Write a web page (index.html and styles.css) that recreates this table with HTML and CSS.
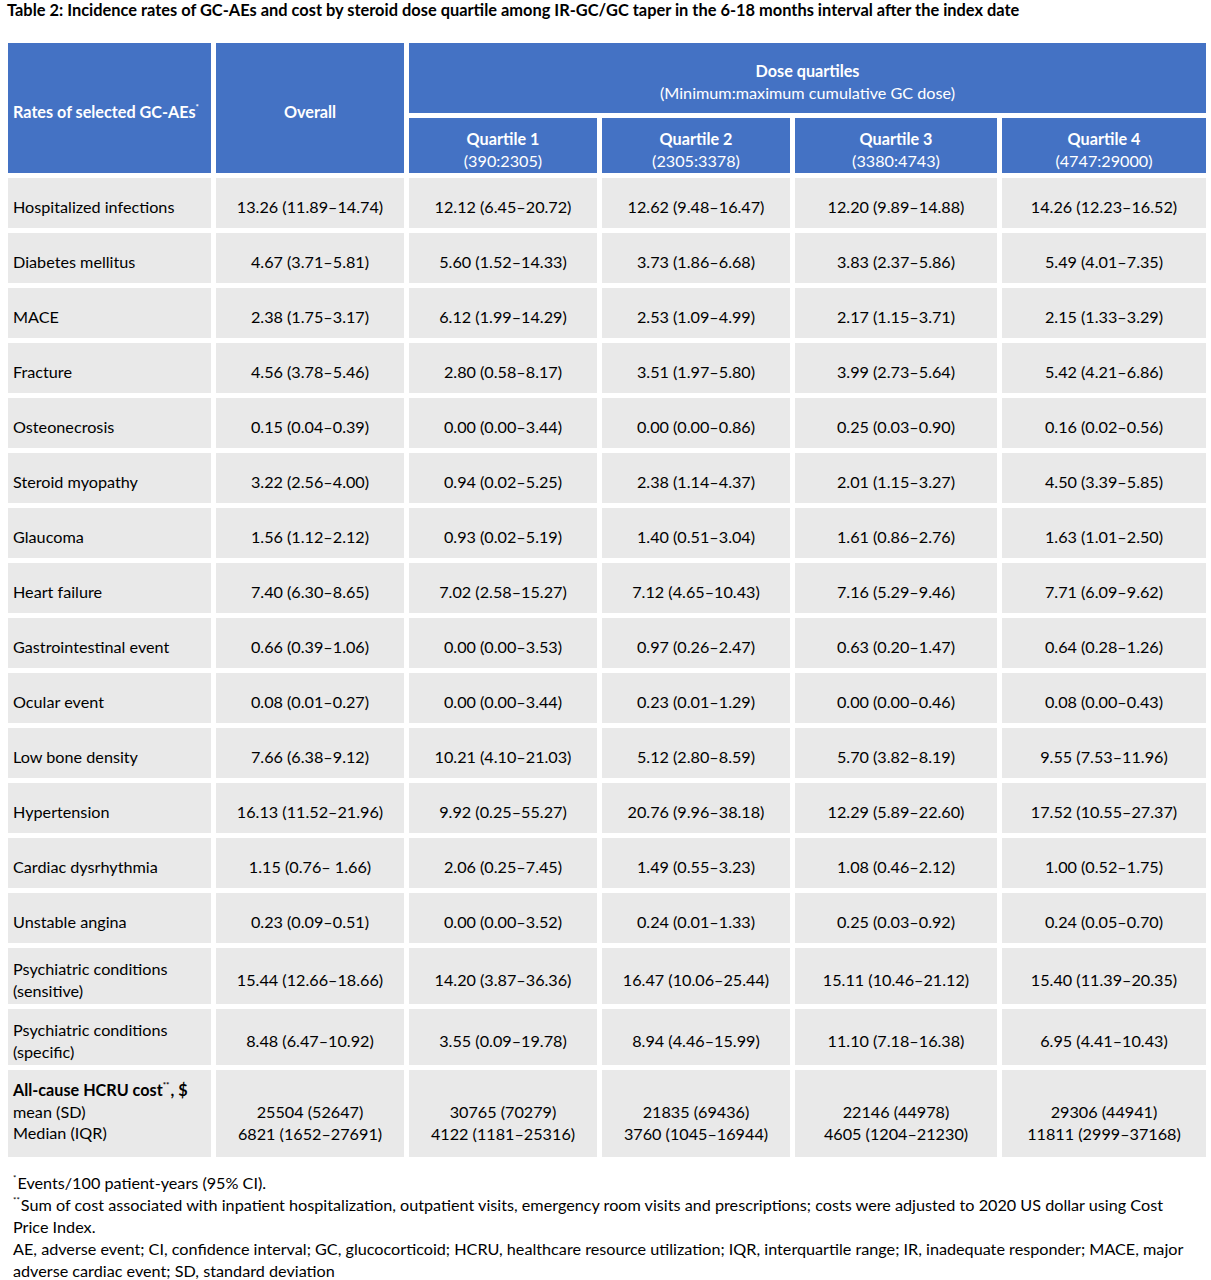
FILE: index.html
```html
<!DOCTYPE html>
<html lang="en">
<head>
<meta charset="utf-8">
<title>Table 2</title>
<link rel="stylesheet" href="styles.css">
</head>
<body>
<div class="page">
  <h1 class="title">Table 2: Incidence rates of GC-AEs and cost by steroid dose quartile among IR-GC/GC taper in the 6-18 months interval after the index date</h1>
  <div class="grid">
    <div class="hd hd-label"><span>Rates of selected GC-AEs<sup>*</sup></span></div>
    <div class="hd hd-overall"><b>Overall</b></div>
    <div class="hd hd-dose"><b>Dose quartiles</b><span>(Minimum:maximum cumulative GC dose)</span></div>
    <div class="hd hd-q"><b>Quartile 1</b><span>(390:2305)</span></div>
    <div class="hd hd-q"><b>Quartile 2</b><span>(2305:3378)</span></div>
    <div class="hd hd-q"><b>Quartile 3</b><span>(3380:4743)</span></div>
    <div class="hd hd-q"><b>Quartile 4</b><span>(4747:29000)</span></div>

    <div class="c lbl">Hospitalized infections</div><div class="c">13.26 (11.89–14.74)</div><div class="c">12.12 (6.45–20.72)</div><div class="c">12.62 (9.48–16.47)</div><div class="c">12.20 (9.89–14.88)</div><div class="c">14.26 (12.23–16.52)</div>
    <div class="c lbl">Diabetes mellitus</div><div class="c">4.67 (3.71–5.81)</div><div class="c">5.60 (1.52–14.33)</div><div class="c">3.73 (1.86–6.68)</div><div class="c">3.83 (2.37–5.86)</div><div class="c">5.49 (4.01–7.35)</div>
    <div class="c lbl">MACE</div><div class="c">2.38 (1.75–3.17)</div><div class="c">6.12 (1.99–14.29)</div><div class="c">2.53 (1.09–4.99)</div><div class="c">2.17 (1.15–3.71)</div><div class="c">2.15 (1.33–3.29)</div>
    <div class="c lbl">Fracture</div><div class="c">4.56 (3.78–5.46)</div><div class="c">2.80 (0.58–8.17)</div><div class="c">3.51 (1.97–5.80)</div><div class="c">3.99 (2.73–5.64)</div><div class="c">5.42 (4.21–6.86)</div>
    <div class="c lbl">Osteonecrosis</div><div class="c">0.15 (0.04–0.39)</div><div class="c">0.00 (0.00–3.44)</div><div class="c">0.00 (0.00–0.86)</div><div class="c">0.25 (0.03–0.90)</div><div class="c">0.16 (0.02–0.56)</div>
    <div class="c lbl">Steroid myopathy</div><div class="c">3.22 (2.56–4.00)</div><div class="c">0.94 (0.02–5.25)</div><div class="c">2.38 (1.14–4.37)</div><div class="c">2.01 (1.15–3.27)</div><div class="c">4.50 (3.39–5.85)</div>
    <div class="c lbl">Glaucoma</div><div class="c">1.56 (1.12–2.12)</div><div class="c">0.93 (0.02–5.19)</div><div class="c">1.40 (0.51–3.04)</div><div class="c">1.61 (0.86–2.76)</div><div class="c">1.63 (1.01–2.50)</div>
    <div class="c lbl">Heart failure</div><div class="c">7.40 (6.30–8.65)</div><div class="c">7.02 (2.58–15.27)</div><div class="c">7.12 (4.65–10.43)</div><div class="c">7.16 (5.29–9.46)</div><div class="c">7.71 (6.09–9.62)</div>
    <div class="c lbl">Gastrointestinal event</div><div class="c">0.66 (0.39–1.06)</div><div class="c">0.00 (0.00–3.53)</div><div class="c">0.97 (0.26–2.47)</div><div class="c">0.63 (0.20–1.47)</div><div class="c">0.64 (0.28–1.26)</div>
    <div class="c lbl">Ocular event</div><div class="c">0.08 (0.01–0.27)</div><div class="c">0.00 (0.00–3.44)</div><div class="c">0.23 (0.01–1.29)</div><div class="c">0.00 (0.00–0.46)</div><div class="c">0.08 (0.00–0.43)</div>
    <div class="c lbl">Low bone density</div><div class="c">7.66 (6.38–9.12)</div><div class="c">10.21 (4.10–21.03)</div><div class="c">5.12 (2.80–8.59)</div><div class="c">5.70 (3.82–8.19)</div><div class="c">9.55 (7.53–11.96)</div>
    <div class="c lbl">Hypertension</div><div class="c">16.13 (11.52–21.96)</div><div class="c">9.92 (0.25–55.27)</div><div class="c">20.76 (9.96–38.18)</div><div class="c">12.29 (5.89–22.60)</div><div class="c">17.52 (10.55–27.37)</div>
    <div class="c lbl">Cardiac dysrhythmia</div><div class="c">1.15 (0.76– 1.66)</div><div class="c">2.06 (0.25–7.45)</div><div class="c">1.49 (0.55–3.23)</div><div class="c">1.08 (0.46–2.12)</div><div class="c">1.00 (0.52–1.75)</div>
    <div class="c lbl">Unstable angina</div><div class="c">0.23 (0.09–0.51)</div><div class="c">0.00 (0.00–3.52)</div><div class="c">0.24 (0.01–1.33)</div><div class="c">0.25 (0.03–0.92)</div><div class="c">0.24 (0.05–0.70)</div>

    <div class="c lbl"><div>Psychiatric conditions<br>(sensitive)</div></div><div class="c top">15.44 (12.66–18.66)</div><div class="c top">14.20 (3.87–36.36)</div><div class="c top">16.47 (10.06–25.44)</div><div class="c top">15.11 (10.46–21.12)</div><div class="c top">15.40 (11.39–20.35)</div>
    <div class="c lbl"><div>Psychiatric conditions<br>(specific)</div></div><div class="c top">8.48 (6.47–10.92)</div><div class="c top">3.55 (0.09–19.78)</div><div class="c top">8.94 (4.46–15.99)</div><div class="c top">11.10 (7.18–16.38)</div><div class="c top">6.95 (4.41–10.43)</div>

    <div class="c lbl cost"><div><b>All-cause HCRU cost<sup>**</sup>, $</b><br>mean (SD)<br>Median (IQR)</div></div>
    <div class="c cost cost-v"><div>25504 (52647)<br>6821 (1652–27691)</div></div>
    <div class="c cost cost-v"><div>30765 (70279)<br>4122 (1181–25316)</div></div>
    <div class="c cost cost-v"><div>21835 (69436)<br>3760 (1045–16944)</div></div>
    <div class="c cost cost-v"><div>22146 (44978)<br>4605 (1204–21230)</div></div>
    <div class="c cost cost-v"><div>29306 (44941)<br>11811 (2999–37168)</div></div>
  </div>
  <div class="notes">
    <p><sup>*</sup>Events/100 patient-years (95% CI).</p>
    <p><sup>**</sup>Sum of cost associated with inpatient hospitalization, outpatient visits, emergency room visits and prescriptions; costs were adjusted to 2020 US dollar using Cost Price Index.</p>
    <p>AE, adverse event; CI, confidence interval; GC, glucocorticoid; HCRU, healthcare resource utilization; IQR, interquartile range; IR, inadequate responder; MACE, major adverse cardiac event; SD, standard deviation</p>
  </div>
</div>
</body>
</html>
```

FILE: styles.css
```css
html, body {
  margin: 0;
  padding: 0;
  background: #ffffff;
}

.page {
  font-family: Lato, "Open Sans", "Liberation Sans", sans-serif;
  color: #000000;
  padding: 0 5px 0 8px;
  width: 1198px;
}

.title {
  margin: 0 0 0 -1px;
  padding-top: 0;
  height: 43px;
  font-size: 16.4px;
  font-weight: 700;
  line-height: 20px;
  white-space: nowrap;
}

.grid {
  display: grid;
  grid-template-columns: 203px 188px 188px 188px 202px 204px;
  grid-template-rows: 70px 55px repeat(14, 50px) 56px 56px 87px;
  gap: 5px;
  font-size: 16.2px;
  line-height: 22px;
}

.hd {
  background: #4472c4;
  color: #ffffff;
  display: flex;
  flex-direction: column;
  justify-content: center;
  align-items: center;
  text-align: center;
  padding-top: 8.5px;
  box-sizing: border-box;
}

.hd b {
  font-weight: 700;
}

.hd span {
  font-weight: 400;
}

.hd.hd-label {
  grid-row: 1 / span 2;
  grid-column: 1;
  align-items: flex-start;
  text-align: left;
  padding-left: 5px;
}

.hd.hd-label span {
  font-weight: 700;
}

.hd-overall {
  grid-row: 1 / span 2;
  grid-column: 2;
}

.hd-dose {
  grid-row: 1;
  grid-column: 3 / span 4;
}

.hd-q {
  grid-row: 2;
}

sup {
  font-size: 8px;
  line-height: 12px;
  vertical-align: top;
  margin-right: 1px;
}

.c {
  background: #e9e9e9;
  display: flex;
  align-items: center;
  justify-content: center;
  text-align: center;
  padding-top: 8px;
  box-sizing: border-box;
  white-space: nowrap;
}

.c.lbl {
  justify-content: flex-start;
  text-align: left;
  padding-left: 5px;
}

.c.cost {
  align-items: flex-start;
  padding-top: 9px;
  line-height: 21.5px;
}

.c.cost-v {
  padding-top: 31px;
}

.notes {
  margin-top: 15px;
  font-size: 16.2px;
  line-height: 22px;
  padding-left: 5px;
  padding-right: 8px;
}

.notes p {
  margin: 0;
}
```
